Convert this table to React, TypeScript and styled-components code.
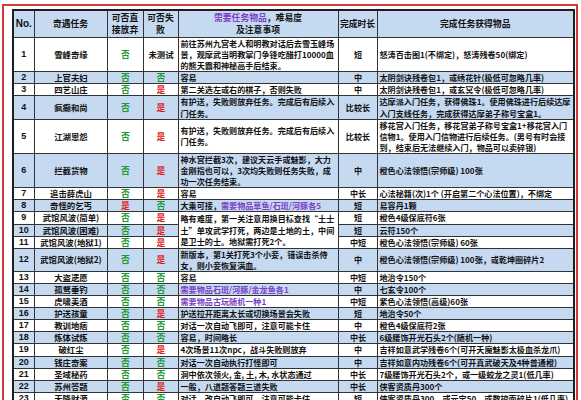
import React from 'react';
import styled, { createGlobalStyle } from 'styled-components';

const Global = createGlobalStyle`
  html, body { margin: 0; padding: 0; background: #fff; overflow: hidden; }
  body { font-family: "Noto Sans CJK SC", "Noto Sans", sans-serif; }
`;

const Frame = styled.div`
  margin: 4px 0 0 2px;
  width: 576px;
  box-sizing: border-box;
  border: 2px solid #cf3b3b;
  padding: 3px 3px 0 8px;
`;

const Table = styled.table`
  border-collapse: collapse;
  table-layout: fixed;
  width: 561px;
  border: 2px solid #1e1e1e;
  font-size: 8.1px;
  font-weight: 700;
  color: #111;
  line-height: 11.1px;
`;

const Th = styled.th`
  background: #c5d9f1;
  border: 1px solid #333;
  font-size: 8.8px;
  line-height: 12.5px;
  font-weight: 700;
  height: 26px;
  padding: 0;
  text-align: center;
  color: #111;
`;

const NoHead = styled(Th)`
  font-family: "Liberation Sans", Arial, sans-serif;
  font-size: 10px;
`;

const Tr = styled.tr<{ $blue: boolean }>`
  background: ${(p) => (p.$blue ? '#c5d9f1' : '#ffffff')};
`;

const Td = styled.td<{ $align?: 'left' | 'center'; $bg?: string }>`
  border: 1px solid #333;
  padding: 0 1px 0 2px;
  text-align: ${(p) => p.$align || 'center'};
  white-space: nowrap;
  overflow: hidden;
  vertical-align: middle;
  ${(p) => (p.$bg ? `background: ${p.$bg};` : '')}
`;

const NumCell = styled(Td)`
  font-family: "Liberation Sans", Arial, sans-serif;
  font-size: 9px;
  padding: 0;
`;

const NameCell = styled(Td)`
  font-size: 8.4px;
`;

const YesNo = styled.span<{ $yes: boolean }>`
  color: ${(p) => (p.$yes ? '#e01b1b' : '#1e9a34')};
  font-size: 8.8px;
`;

const Plain = styled.span`
  color: #111;
  font-size: 8.4px;
`;

const Purple = styled.span`
  color: #7a3fc6;
`;

type Flag = '是' | '否' | '未测试';

interface Row {
  no: number;
  name: string;
  drop: Flag;
  fail: Flag;
  desc?: React.ReactNode[];
  span?: number;
  time: string;
  reward: React.ReactNode[];
}

const rows: Row[] = [
  {
    no: 1, name: '雪峰奇缘', drop: '否', fail: '未测试',
    desc: ['前往苏州九宫老人和明教对话后去雪玉峰场', '景，观摩武当明教掌门争锋吃醋打10000血', '的熊天霸和神秘高手后结束。'],
    time: '短', reward: ['怒涛百击图1(不绑定)，怒涛残卷50(绑定)'],
  },
  { no: 2, name: '上官夫妇', drop: '否', fail: '否', desc: ['容易'], time: '中', reward: ['太阴剑诀残卷包1，或绣花针(极低可忽略几率)'] },
  { no: 3, name: '四艺山庄', drop: '否', fail: '是', desc: ['第二关选左或右的棋子，否则失败'], time: '中', reward: ['太阴剑诀残卷包1，或玄冥令(极低可忽略几率)'] },
  {
    no: 4, name: '疯癫和尚', drop: '否', fail: '是',
    desc: ['有护送，失败则放弃任务。完成后有后续入', '门任务。'],
    time: '比较长', reward: ['达摩派入门任务，获得佛珠1。使用佛珠进行后续达摩', '入门支线任务，完成获得达摩弟子称号宝盒1。'],
  },
  {
    no: 5, name: '江湖恩怨', drop: '否', fail: '是',
    desc: ['有护送，失败则放弃任务。完成后有后续入', '门任务。'],
    time: '比较长', reward: ['移花宫入门任务，移花宫弟子称号宝盒1+移花宫入门', '信物1。使用入门信物进行后续任务。(男号有时会接', '到，结束后无法继续入门，物品可以卖碎银)'],
  },
  {
    no: 6, name: '拦截货物', drop: '否', fail: '是',
    desc: ['神水宫拦截3次，建议天云手或魅影，大力', '金刚指也可以，3次均失败则任务失败，成', '功一次任务结束。'],
    time: '中', reward: ['橙色心法领悟(宗师级) 100张'],
  },
  { no: 7, name: '追击薛虎山', drop: '否', fail: '是', desc: ['容易'], time: '中长', reward: ['心法秘籍(次)1个 (开启第二个心法位置)，不绑定'] },
  {
    no: 8, name: '奇怪的乞丐', drop: '是', fail: '否',
    desc: [<>大乘可接，<Purple>需要物品草鱼/石斑/河豚各5</Purple></>],
    time: '短', reward: ['易容丹1颗'],
  },
  {
    no: 9, name: '武馆风波(简单)', drop: '否', fail: '是',
    desc: ['略有难度，第一关注意用换目标查找“土士', '土”单攻武学打死，两边是土地的土，中间', '是卫士的士。地狱需打死2个。'], span: 3,
    time: '短', reward: ['橙色4级保底符6张'],
  },
  { no: 10, name: '武馆风波(困难)', drop: '否', fail: '是', time: '短', reward: ['云符150个'] },
  { no: 11, name: '武馆风波(地狱1)', drop: '否', fail: '是', time: '中短', reward: ['橙色心法领悟(宗师级) 60张'] },
  {
    no: 12, name: '武馆风波(地狱2)', drop: '否', fail: '是',
    desc: ['新版本，第1关打死3个小妾，错误击杀侍', '女，则小妾恢复满血。'],
    time: '中', reward: ['橙色心法领悟(宗师级) 100张，或乾坤圈碎片2'],
  },
  { no: 13, name: '大盗遗愿', drop: '否', fail: '否', desc: ['容易'], time: '中短', reward: ['地治令150个'] },
  { no: 14, name: '孤鹜垂钓', drop: '否', fail: '否', desc: [<Purple>需要物品石斑/河豚/金龙鱼各1</Purple>], time: '中', reward: ['七玄令100个'] },
  { no: 15, name: '虎啸美酒', drop: '否', fail: '否', desc: [<Purple>需要物品古玩随机一种1</Purple>], time: '中短', reward: ['紫色心法领悟(高级)60张'] },
  { no: 16, name: '护送孩童', drop: '否', fail: '是', desc: ['护送拉开距离太长或切换场景会失败'], time: '短', reward: ['地治令50个'] },
  { no: 17, name: '教训地痞', drop: '否', fail: '否', desc: ['对话一次自动飞即可，注意可能卡住'], time: '中', reward: ['橙色4级保底符2张'] },
  { no: 18, name: '炼体试炼', drop: '否', fail: '否', desc: ['容易，时间略长'], time: '中长', reward: ['6级腰饰开光石头2个(随机一种)'] },
  { no: 19, name: '破红尘', drop: '否', fail: '是', desc: ['4次场景11次npc，战斗失败则放弃'], time: '中', reward: ['吉祥如意武学残卷6个(可开天魔魅影太极血杀龙爪)'] },
  { no: 20, name: '钱庄奇案', drop: '否', fail: '否', desc: ['对话一次自动执行打怪即可'], time: '中', reward: ['吉祥如意内功残卷6个(可开真武破天及4种普通橙)'] },
  { no: 21, name: '圣域秘药', drop: '否', fail: '否', desc: ['洞中依次领火, 金, 土, 木, 水状态通过'], time: '中长', reward: ['7级腰饰开光石头2个，或一级蛟龙之灵1(低几率)'] },
  { no: 22, name: '苏州答题', drop: '否', fail: '是', desc: ['一般，八道题答题三道失败'], time: '中长', reward: ['侠客资质丹300个'] },
  { no: 23, name: '天降财源', drop: '否', fail: '否', desc: ['对话，改自动飞即可，注意可能卡住'], time: '短', reward: ['侠客资质丹300，或元宝50，或数控面碎片1(低几率)'] },
];

const Lines: React.FC<{ lines: React.ReactNode[] }> = ({ lines }) => (
  <>
    {lines.map((l, i) => (
      <React.Fragment key={i}>
        {i > 0 && <br />}
        {l}
      </React.Fragment>
    ))}
  </>
);

const FlagText: React.FC<{ v: Flag }> = ({ v }) =>
  v === '未测试' ? <Plain>{v}</Plain> : <YesNo $yes={v === '是'}>{v}</YesNo>;

const widths = [21, 73, 36, 35, 160, 39, 197];

export default function App() {
  return (
    <>
      <Global />
      <Frame>
        <Table>
          <colgroup>
            {widths.map((w, i) => (
              <col key={i} style={{ width: w }} />
            ))}
          </colgroup>
          <thead>
            <tr>
              <NoHead>No.</NoHead>
              <Th>奇遇任务</Th>
              <Th>可否直<br />接放弃</Th>
              <Th>可否失<br />败</Th>
              <Th><Purple>需要任务物品</Purple>，难易度<br />及注意事项</Th>
              <Th>完成时长</Th>
              <Th>完成任务获得物品</Th>
            </tr>
          </thead>
          <tbody>
            {rows.map((r, idx) => (
              <Tr key={r.no} $blue={idx % 2 === 1}>
                <NumCell>{r.no}</NumCell>
                <NameCell>{r.name}</NameCell>
                <Td><FlagText v={r.drop} /></Td>
                <Td><FlagText v={r.fail} /></Td>
                {r.desc && (
                  <Td $align="left" rowSpan={r.span} $bg={r.span ? '#ffffff' : undefined}>
                    <Lines lines={r.desc} />
                  </Td>
                )}
                <Td>{r.time}</Td>
                <Td $align="left">
                  <Lines lines={r.reward} />
                </Td>
              </Tr>
            ))}
          </tbody>
        </Table>
      </Frame>
    </>
  );
}
